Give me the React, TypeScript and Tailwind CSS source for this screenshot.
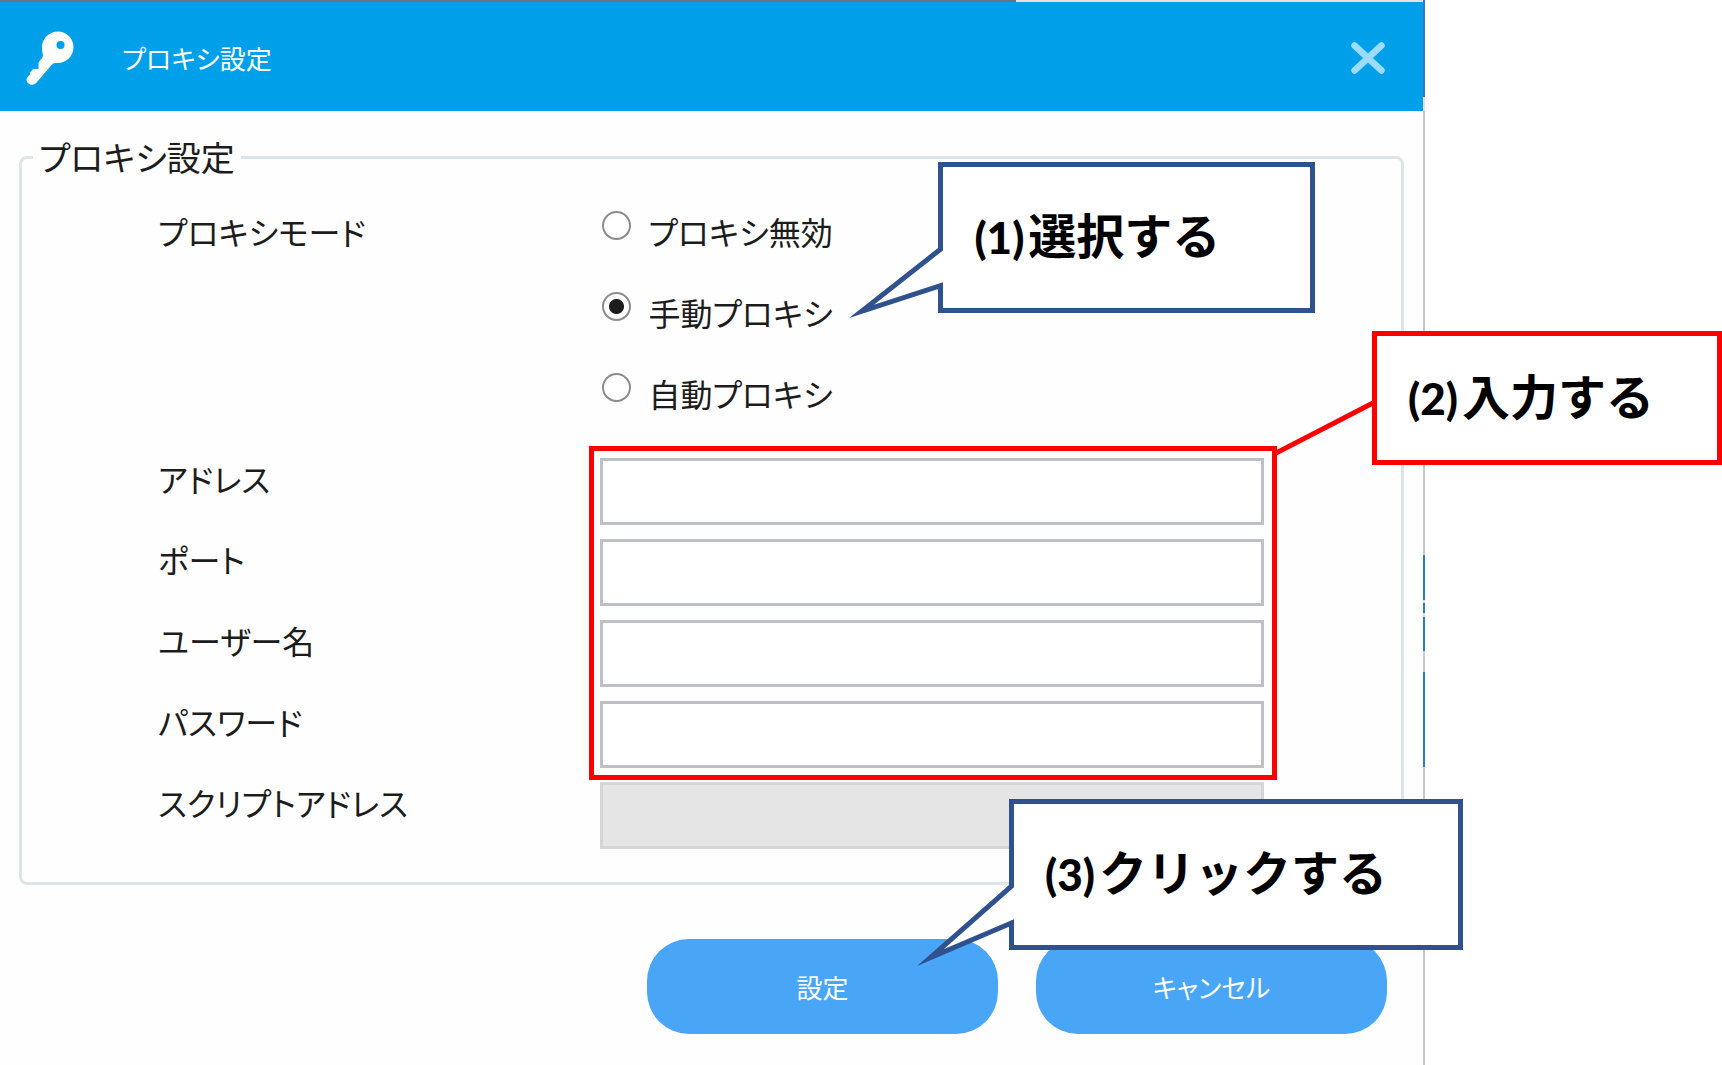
import { useState } from "react";
import type { ReactNode } from "react";

const MODES = ["プロキシ無効", "手動プロキシ", "自動プロキシ"];

const FIELDS = [
  { id: "address", label: "アドレス", type: "text" },
  { id: "port", label: "ポート", type: "text" },
  { id: "user", label: "ユーザー名", type: "text" },
  { id: "password", label: "パスワード", type: "password" },
];

function KeyIcon() {
  return (
    <svg viewBox="0 0 48 54" className="h-[54px] w-12 shrink-0" aria-hidden="true">
      <path
        fill="#fff"
        fillRule="evenodd"
        d="M32 0.5C40.600 0.500 47.500 7.400 47.500 16C47.500 25 40.500 32 31.500 32C29.500 32 28 31.700 26.500 33L10.500 51.500C8 54.200 4.500 54.500 2.500 52.500C0 50.500 0 47.500 2 45.500L4 43.500V41.500L7 38H12.500V32.500C12.500 30 17 27.500 17 24.500C16.300 21 16 19 16 16C16 7.400 23.400 0.500 32 0.500ZM34.500 10A4 4 0 1 0 34.500 18A4 4 0 1 0 34.500 10Z"
      />
    </svg>
  );
}

function CalloutText({ step, children }: { step: number; children: ReactNode }) {
  return (
    <p className="whitespace-nowrap text-[48px] font-bold leading-[60px] text-black">
      <span className="mr-1 font-['Lato',sans-serif] text-[44px] font-black">({step})</span>
      {children}
    </p>
  );
}

function Tail({ className, viewBox, d, cover }: { className: string; viewBox: string; d: string; cover: string }) {
  return (
    <svg className={className} viewBox={viewBox} aria-hidden="true">
      <path d={cover} fill="#fff" />
      <path d={d} fill="#fff" stroke="#2f528f" strokeWidth="5" strokeMiterlimit="12" />
    </svg>
  );
}

/* Slivers of the window behind the dialog that show along its right edge. */
function EdgeStrip() {
  return (
    <div className="absolute inset-y-0 right-0 flex w-[2px] flex-col" aria-hidden="true">
      <div className="h-[97px] bg-[#3478c4]" />
      <div className="h-[14px] bg-[#ecd9d0]" />
      <div className="h-[444px] bg-[#c9c9c9]" />
      <div className="h-[45px] bg-[#2a7cc0]" />
      <div className="h-[3px] bg-[#d8d8d8]" />
      <div className="h-[10px] bg-[#2a7cc0]" />
      <div className="h-[4px] bg-[#d8d8d8]" />
      <div className="h-[34px] bg-[#2a7cc0]" />
      <div className="h-[21px] bg-[#c9c9c9]" />
      <div className="h-[95px] bg-[#2a7cc0]" />
      <div className="flex-1 bg-[#c9c9c9]" />
    </div>
  );
}

export default function App() {
  const [mode, setMode] = useState(1);

  return (
    <div className="min-h-screen overflow-hidden bg-white font-['Noto_Sans_CJK_JP',sans-serif] text-[#1c1c1c]">
      <main className="relative min-h-screen w-[82.75%] bg-[#fefefe] pr-[2px]">
        <div className="flex h-[2px]">
          <div className="w-5/7 bg-[#6b7286]" />
          <div className="flex-1 bg-[#efdfdb]" />
        </div>
        <header className="flex h-[109px] items-center bg-[#009fe9] pl-[26px] pr-[38px] pt-[2px]">
          <KeyIcon />
          <h1 className="ml-12 flex-1 text-[26px] leading-10 text-white [font-feature-settings:'palt']">
            プロキシ設定
          </h1>
          <button type="button" aria-label="閉じる" className="h-8 w-[34px]">
            <svg viewBox="0 0 34 32" className="h-8 w-[34px]" aria-hidden="true">
              <path d="M3.500 3.500L30.500 28.500M30.500 3.500L3.500 28.500" fill="none" stroke="#9ddcf8" strokeWidth="6.500" strokeLinecap="round" />
            </svg>
          </button>
        </header>

        <form onSubmit={(e) => e.preventDefault()}>
          <fieldset className="mx-[19px] mt-6 rounded-lg border-[3px] border-[#dde5ea]">
            <legend className="ml-[11px] px-[6px] text-[34px] leading-[44px] [font-feature-settings:'palt']">
              プロキシ設定
            </legend>
            <div className="flex pb-[33px] pl-[136px] pr-[137px] pt-8 text-[32px] leading-10 [font-feature-settings:'palt']">
              <div className="flex w-2/5 flex-col">
                <span id="mode-label" className="h-[247px]">プロキシモード</span>
                <div className="flex flex-col gap-[14px]">
                  {FIELDS.map((f) => (
                    <label key={f.id} htmlFor={f.id} className="h-[67px]">
                      {f.label}
                    </label>
                  ))}
                  <label htmlFor="script" className="h-[67px]">スクリプトアドレス</label>
                </div>
              </div>

              <div className="flex flex-1 flex-col">
                <div role="radiogroup" aria-labelledby="mode-label" className="relative flex h-[247px] flex-col gap-[41px]">
                  {MODES.map((name, i) => (
                    <label key={name} className="flex items-start gap-[17px] pl-[2px]">
                      <input
                        type="radio"
                        name="mode"
                        checked={mode === i}
                        onChange={() => setMode(i)}
                        className="size-[29px] shrink-0 appearance-none rounded-full border-2 border-[#8c8c8c] bg-white checked:bg-[radial-gradient(circle,#1c1c1c_7px,#fff_8px)]"
                      />
                      {name}
                    </label>
                  ))}
                  <div className="absolute -top-[49px] left-[338px] z-10 h-[151px] w-[377px] border-[5px] border-[#2f528f] bg-white pl-[31px] pt-9 [font-feature-settings:normal]">
                    <Tail
                      className="absolute -left-[95px] top-[73px] h-[88px] w-[95px]"
                      viewBox="0 0 95 88"
                      cover="M89 10H95V43H89Z"
                      d="M92.500 2V9.200L13.600 71.300L92.500 45.700V52"
                    />
                    <CalloutText step={1}>選択する</CalloutText>
                  </div>
                </div>

                <div className="relative flex flex-col gap-[14px]">
                  {FIELDS.map((f) => (
                    <input
                      key={f.id}
                      id={f.id}
                      type={f.type}
                      className="h-[67px] w-full border-[3px] border-[#bfc0c5] bg-white px-3 outline-none"
                    />
                  ))}
                  <div className="pointer-events-none absolute -bottom-3 -left-[11px] -right-[13px] -top-3 border-[5px] border-[#ff0000]" />
                  <svg
                    className="pointer-events-none absolute -top-[60px] left-full ml-[12px] h-[60px] w-[98px]"
                    viewBox="0 0 98 60"
                    aria-hidden="true"
                  >
                    <path d="M0 55L98 4.500" stroke="#ff0000" strokeWidth="5" />
                  </svg>
                  <div className="absolute -top-[127px] left-full z-10 ml-[108px] h-[134px] w-[350px] border-[5px] border-[#ff0000] bg-white pl-[31px] pt-7 [font-feature-settings:normal]">
                    <CalloutText step={2}>入力する</CalloutText>
                  </div>
                </div>

                <input
                  id="script"
                  type="text"
                  disabled
                  className="mt-[14px] h-[67px] w-full border-[3px] border-[#d4d5d8] bg-[#e5e5e5] px-3"
                />
              </div>
            </div>
          </fieldset>

          <div className="relative mt-[54px] flex justify-end gap-[38px] pr-9 text-[26px] leading-10 text-white [font-feature-settings:'palt']">
            <button type="submit" className="h-[95px] w-[351px] rounded-[42px] bg-[#49a5f6]">
              設定
            </button>
            <button type="button" className="h-[95px] w-[351px] rounded-[42px] bg-[#49a5f6]">
              キャンセル
            </button>
            <div className="absolute -right-[40px] -top-[140px] z-10 h-[151px] w-[454px] border-[5px] border-[#2f528f] bg-white pl-[31px] pt-9 [font-feature-settings:normal]">
              <Tail
                className="absolute -left-[97px] top-[75px] h-[92px] w-[97px]"
                viewBox="0 0 97 92"
                cover="M91 8H97V41H91Z"
                d="M94.500 0V7.200L13.400 78.600L94.500 44V52"
              />
              <CalloutText step={3}>クリックする</CalloutText>
            </div>
          </div>
        </form>
        <EdgeStrip />
      </main>
    </div>
  );
}
